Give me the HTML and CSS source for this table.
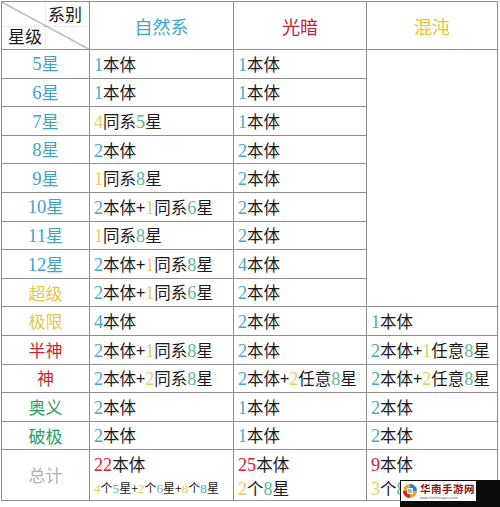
FILE: index.html
```html
<!DOCTYPE html>
<html lang="zh">
<head>
<meta charset="utf-8">
<title>星级系别</title>
<link rel="stylesheet" href="styles.css">
</head>
<body>
<div class="page">
<table class="grid">
  <colgroup>
    <col class="c1"><col class="c2"><col class="c3"><col class="c4">
  </colgroup>
  <thead>
    <tr class="head">
      <th class="corner">
        <div class="corner-in">
          <span class="ct">系别</span>
          <span class="cb">星级</span>
        </div>
      </th>
      <th class="h-nat">自然系</th>
      <th class="h-light">光暗</th>
      <th class="h-chaos">混沌</th>
    </tr>
  </thead>
  <tbody>
    <tr><td class="lab blue"><span class="n">5</span>星</td><td><span class="n b">1</span>本体</td><td><span class="n b">1</span>本体</td><td class="empty" rowspan="9"></td></tr>
    <tr><td class="lab blue"><span class="n">6</span>星</td><td><span class="n b">1</span>本体</td><td><span class="n b">1</span>本体</td></tr>
    <tr><td class="lab blue"><span class="n">7</span>星</td><td><span class="n y">4</span>同系<span class="n g">5</span>星</td><td><span class="n b">1</span>本体</td></tr>
    <tr><td class="lab blue"><span class="n">8</span>星</td><td><span class="n b">2</span>本体</td><td><span class="n b">2</span>本体</td></tr>
    <tr><td class="lab blue"><span class="n">9</span>星</td><td><span class="n y">1</span>同系<span class="n g">8</span>星</td><td><span class="n b">2</span>本体</td></tr>
    <tr><td class="lab blue"><span class="n">10</span>星</td><td><span class="n b">2</span>本体+<span class="n y">1</span>同系<span class="n g">6</span>星</td><td><span class="n b">2</span>本体</td></tr>
    <tr><td class="lab blue"><span class="n">11</span>星</td><td><span class="n y">1</span>同系<span class="n g">8</span>星</td><td><span class="n b">2</span>本体</td></tr>
    <tr><td class="lab blue"><span class="n">12</span>星</td><td><span class="n b">2</span>本体+<span class="n y">1</span>同系<span class="n g">8</span>星</td><td><span class="n b">4</span>本体</td></tr>
    <tr><td class="lab yel">超级</td><td><span class="n b">2</span>本体+<span class="n y">1</span>同系<span class="n g">6</span>星</td><td><span class="n b">2</span>本体</td></tr>
    <tr><td class="lab yel">极限</td><td><span class="n b">4</span>本体</td><td><span class="n b">2</span>本体</td><td><span class="n b">1</span>本体</td></tr>
    <tr><td class="lab red">半神</td><td><span class="n b">2</span>本体+<span class="n y">1</span>同系<span class="n g">8</span>星</td><td><span class="n b">2</span>本体</td><td><span class="n b">2</span>本体+<span class="n y">1</span>任意<span class="n g">8</span>星</td></tr>
    <tr><td class="lab red">神</td><td><span class="n b">2</span>本体+<span class="n y">2</span>同系<span class="n g">8</span>星</td><td><span class="n b">2</span>本体+<span class="n y">2</span>任意<span class="n g">8</span>星</td><td><span class="n b">2</span>本体+<span class="n y">2</span>任意<span class="n g">8</span>星</td></tr>
    <tr><td class="lab grn">奥义</td><td><span class="n b">2</span>本体</td><td><span class="n b">1</span>本体</td><td><span class="n b">2</span>本体</td></tr>
    <tr><td class="lab grn">破极</td><td><span class="n b">2</span>本体</td><td><span class="n b">1</span>本体</td><td><span class="n b">2</span>本体</td></tr>
    <tr class="total">
      <td class="lab gray">总计</td>
      <td><div class="l1"><span class="n r">22</span>本体</div><div class="l2 small"><span class="n y">4</span>个<span class="n g">5</span>星+<span class="n y">2</span>个<span class="n g">6</span>星+<span class="n y">8</span>个<span class="n b">8</span>星</div></td>
      <td><div class="l1"><span class="n r">25</span>本体</div><div class="l2"><span class="n y">2</span>个<span class="n g">8</span>星</div></td>
      <td><div class="l1"><span class="n r">9</span>本体</div><div class="l2"><span class="n y">3</span>个<span class="n g">8</span>星</div></td>
    </tr>
  </tbody>
</table>
<div class="wm">
  <div class="wm-in">
    <svg class="wm-logo" width="16" height="16" viewBox="0 0 16 16">
      <circle cx="8" cy="8" r="7" fill="#f4a623"/>
      <path d="M8 1a7 7 0 0 1 7 7H8z" fill="#2a7fd0"/>
      <path d="M1 8a7 7 0 0 0 7 7V8z" fill="#d8262e"/>
      <rect x="5" y="5" width="6" height="6" rx="1" fill="#fff"/>
      <path d="M6 7h4M6 9h4" stroke="#2a7fd0" stroke-width="1"/>
    </svg>
    <div class="wm-text">
      <span class="wm-name">华南手游网</span>
      <span class="wm-url">www.hnshouyou.com</span>
    </div>
  </div>
</div>
</div>
</body>
</html>
```

FILE: styles.css
```css
html, body {
  margin: 0;
  padding: 0;
  background: #fff;
}
.page {
  position: relative;
  width: 500px;
  height: 507px;
  overflow: hidden;
}
.grid {
  border-collapse: collapse;
  table-layout: fixed;
  width: 497px;
  margin: 1px 0 0 1px;
  font-family: "Noto Sans CJK SC", sans-serif;
  font-size: 16.5px;
  color: #1a1a1a;
}
.c1 { width: 88px; }
.c2 { width: 144px; }
.c3 { width: 133px; }
.c4 { width: 131px; }
.grid th, .grid td {
  border: 1px solid #8e8e8e;
  padding: 0 0 0 4px;
  white-space: nowrap;
  overflow: hidden;
  line-height: 20px;
  text-align: left;
  font-weight: normal;
}
.head th {
  height: 47px;
  text-align: center;
  padding: 0;
  font-size: 18px;
}
.grid tbody tr { height: 28.6px; }
.grid tbody tr.total { height: 51px; }
.corner {
  background:
    linear-gradient(to bottom left, transparent calc(50% - 0.7px), #666 50%, transparent calc(50% + 0.7px)),
    linear-gradient(#ececec, #ececec) 0 24px / 100% 1px no-repeat,
    linear-gradient(#ececec, #ececec) 43px 0 / 1px 100% no-repeat;
}
.head th.corner { font-size: 17px; }
.corner-in {
  display: flex;
  flex-direction: column;
  height: 47px;
  justify-content: space-between;
  color: #1a1a1a;
}
.ct {
  align-self: flex-end;
  padding: 2px 7px 0 0;
  line-height: 20px;
}
.cb {
  align-self: flex-start;
  padding: 0 0 3px 6px;
  line-height: 20px;
}
.h-nat { color: #3ca6cc; }
.h-light { color: #c9202e; }
.h-chaos { color: #e8c430; }
.grid td.lab {
  text-align: center;
  padding: 0;
  font-size: 17px;
}
.blue { color: #3ea3cb; }
.yel { color: #e8c54a; }
.red { color: #cb1f2b; }
.grn { color: #2c9c5e; }
.gray { color: #b0b0b0; }
.n {
  font-family: "Liberation Serif", serif;
  font-size: 1.1em;
  line-height: 1;
}
.b { color: #4aa8c7; }
.y { color: #e9cc6a; }
.g { color: #5cb894; }
.r { color: #d0242e; }
.empty { background: #fff; }
.total td { vertical-align: top; }
.grid .total td.lab { vertical-align: middle; }
.l1 {
  line-height: 24px;
  padding-top: 2px;
}
.l2 {
  line-height: 24px;
}
.l2.small {
  font-size: 12px;
}
.wm {
  position: absolute;
  left: 400px;
  top: 480px;
  width: 100px;
  height: 27px;
  background: #0c0c0c;
}
.wm-in {
  display: flex;
  align-items: center;
  gap: 2px;
  width: 74px;
  height: 20px;
  margin: 1px 0 0 1px;
  padding-left: 1px;
  background: #fff;
}
.wm-logo { flex: none; }
.wm-text {
  display: flex;
  flex-direction: column;
  line-height: 1;
  white-space: nowrap;
}
.wm-name {
  font-family: "Noto Sans CJK SC", sans-serif;
  font-weight: bold;
  font-size: 10.5px;
  line-height: 12px;
  color: #8c1515;
  letter-spacing: 0.5px;
}
.wm-url {
  font-family: "Liberation Sans", sans-serif;
  font-size: 4px;
  color: #666;
  line-height: 5px;
}
```
